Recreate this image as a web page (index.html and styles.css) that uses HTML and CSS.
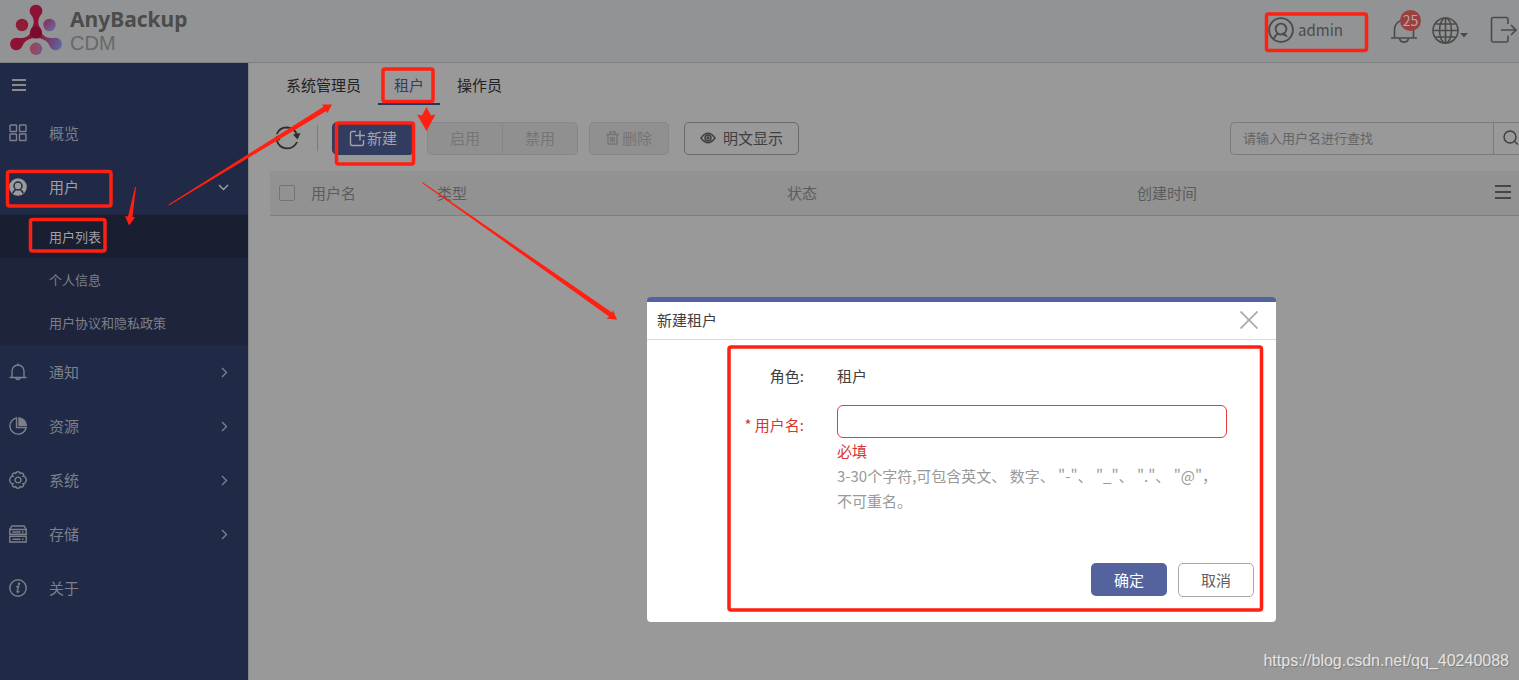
FILE: index.html
```html
<!DOCTYPE html>
<html lang="zh-CN">
<head>
<meta charset="utf-8">
<title>AnyBackup CDM</title>
<link rel="stylesheet" href="styles.css">
</head>
<body>
<div class="app">
  <header class="topbar">
    <div class="brand">
      <svg class="brand-mark" width="54" height="52" viewBox="0 0 54 52" aria-hidden="true">
        <defs>
          <linearGradient id="g" gradientUnits="userSpaceOnUse" x1="22" y1="28" x2="51" y2="42">
            <stop offset="0" stop-color="#8c1236"/><stop offset=".3" stop-color="#861a40"/><stop offset="1" stop-color="#6264a0"/>
          </linearGradient>
          <linearGradient id="h" x1="0" y1="0" x2="1" y2="1">
            <stop offset="0" stop-color="#8c2550"/><stop offset="1" stop-color="#6670ae"/>
          </linearGradient>
          <linearGradient id="k" x1="0" y1="0" x2="1" y2="0">
            <stop offset="0" stop-color="#9c4253"/><stop offset="1" stop-color="#7e5482"/>
          </linearGradient>
        </defs>
        <g fill="url(#g)">
          <path d="M27 .7a6.300 6.300 0 0 1 4.800 10.400C28.500 15 28.500 20 31.500 24.500L33 29.500C36 33.500 39 34.300 45 33.900A6.300 6.300 0 1 1 40.600 42C39 38 36 35.500 31 34.300H23C18 35.500 15 38 13.400 42A6.300 6.300 0 1 1 9 33.900C15 34.300 18 33.500 21 29.500L22.500 24.500C25.500 20 25.500 15 22.200 11.100A6.300 6.300 0 0 1 27 .7z"/>
        </g>
        <circle cx="27" cy="28.500" r="6" fill="#7b0b2f"/>
        <circle cx="13" cy="21" r="6.200" fill="#8f1d36"/>
        <circle cx="40.500" cy="21" r="6.200" fill="url(#h)"/>
        <circle cx="27" cy="44.800" r="6.200" fill="url(#k)"/>
      </svg>
      <div class="brand-text">
        <span class="brand-name">AnyBackup</span>
        <span class="brand-sub">CDM</span>
      </div>
    </div>
    <div class="top-actions">
      <button class="account" type="button">
        <svg width="26" height="26" viewBox="0 0 28 28" class="line thick" aria-hidden="true"><circle cx="14" cy="14" r="12.800"/><circle cx="14" cy="13" r="5.800"/><path d="M6.500 23.500c.8-3 2.200-4.500 4.600-5.500M17 18.500c1.500.7 2.700 1.500 3.300 3M15.500 17l2.500 2.700"/></svg>
        <span>admin</span>
      </button>
      <button class="bell" type="button" aria-label="通知 25">
        <svg width="28" height="28" viewBox="0 0 28 28" class="line mid" aria-hidden="true"><path d="M1 22h26M4.500 22v-8.500a9.500 9.500 0 0 1 19 0V22M9.500 22.500a4.600 4.600 0 0 0 9 0"/></svg>
        <span class="badge">25</span>
      </button>
      <button class="globe" type="button" aria-label="语言">
        <svg width="27" height="27" viewBox="0 0 27 27" class="line mid" aria-hidden="true"><circle cx="13.500" cy="13.500" r="12.500"/><ellipse cx="13.500" cy="13.500" rx="6" ry="12.500"/><path d="M13.500 1v25M1 13.500h25M3.500 7h20M3.500 20h20"/></svg>
        <svg width="8" height="5" viewBox="0 0 8 5" class="caret" aria-hidden="true"><path d="M0 0h8L4 4.500z"/></svg>
      </button>
      <button class="logout" type="button" aria-label="退出">
        <svg width="27" height="28" viewBox="0 0 27 28" class="line mid" aria-hidden="true"><path d="M18 8V3.500Q18 1.500 16 1.500H3.500Q1.500 1.500 1.500 3.500v20.500q0 2 2 2H16q2 0 2-2V19.500M11 14h15M21 9l5 5-5 5"/></svg>
      </button>
    </div>
  </header>

  <div class="shell">
    <nav class="sidebar">
      <button class="collapse" type="button" aria-label="收起菜单">
        <svg width="14" height="12" viewBox="0 0 14 12" aria-hidden="true"><path fill="#8a8b8f" d="M0 0h14v2H0zM0 5h14v2H0zM0 10h14v2H0z"/></svg>
      </button>
      <a class="item" href="#"><svg width="18" height="18" viewBox="0 0 18 18" class="line" aria-hidden="true"><rect x="1" y="1" width="6.500" height="6.500" rx=".5"/><rect x="10.500" y="1" width="6.500" height="6.500" rx=".5"/><rect x="1" y="10" width="6.500" height="6.500" rx=".5"/><rect x="10.500" y="10" width="6.500" height="6.500" rx=".5"/></svg><span>概览</span></a>
      <a class="item open" href="#"><svg width="18" height="18" viewBox="0 0 18 18" aria-hidden="true"><circle cx="9" cy="9" r="8.800" fill="#9b9b9b"/><g fill="none" stroke="#202946" stroke-width="1.500"><circle cx="9" cy="8" r="4"/><path d="M3.800 15.500c.4-2 1.500-3 3-3.800M14.200 15.500c-.4-2-1.500-3-3-3.800"/></g></svg><span>用户</span><svg class="arrow line" width="12" height="12" viewBox="0 0 12 12" aria-hidden="true"><path d="M1 4l4.500 4.500L10 4"/></svg></a>
      <div class="submenu">
        <a class="sub current" href="#">用户列表</a>
        <a class="sub" href="#">个人信息</a>
        <a class="sub" href="#">用户协议和隐私政策</a>
      </div>
      <a class="item" href="#"><svg width="18" height="18" viewBox="0 0 18 18" class="line" aria-hidden="true"><path d="M.5 14.500h17M3 14V8a6 6 0 0 1 12 0v6M9 .5V2M6.800 15a2.300 2.300 0 0 0 4.400 0"/></svg><span>通知</span><svg class="arrow line" width="12" height="12" viewBox="0 0 12 12" aria-hidden="true"><path d="M4 2l4.500 4.500L4 11"/></svg></a>
      <a class="item" href="#"><svg width="18" height="18" viewBox="0 0 18 18" class="line" aria-hidden="true"><path d="M7.500.9A8.200 8.200 0 1 0 17.200 10.500H7.500z"/><path fill="currentColor" d="M10 1v7.300h7.300A7.800 7.800 0 0 0 10 1z"/></svg><span>资源</span><svg class="arrow line" width="12" height="12" viewBox="0 0 12 12" aria-hidden="true"><path d="M4 2l4.500 4.500L4 11"/></svg></a>
      <a class="item" href="#"><svg width="18" height="18" viewBox="0 0 18 18" class="line" aria-hidden="true"><path d="M6.800 2.300Q7.200.8 9 .8t2.200 1.500Q12.500 1.400 13.900 2.600t.3 2.600Q16 5 16.400 6.600q1.200.9.900 2.400t-.9 2.400Q16 13 14.200 12.800q1.100 1.400-.3 2.600t-2.700.3Q10.800 17.200 9 17.200t-2.200-1.500Q5.500 16.600 4.100 15.400t-.3-2.600Q2 13 1.600 11.400.7 10.500.7 9t.9-2.400Q2 5 3.800 5.200 2.700 3.800 4.100 2.600t2.700-.3z"/><circle cx="9" cy="9" r="2.900"/></svg><span>系统</span><svg class="arrow line" width="12" height="12" viewBox="0 0 12 12" aria-hidden="true"><path d="M4 2l4.500 4.500L4 11"/></svg></a>
      <a class="item" href="#"><svg width="18" height="18" viewBox="0 0 18 18" class="line" aria-hidden="true"><path d="M1 4L2.800 1h12.400L17 4M.8 4.500h16.400v4.800H.8zM.8 11.200h16.400V17H.8zM3.500 7h8M13 7h1.500M3.500 14.200h8M13 14.200h1.500"/></svg><span>存储</span><svg class="arrow line" width="12" height="12" viewBox="0 0 12 12" aria-hidden="true"><path d="M4 2l4.500 4.500L4 11"/></svg></a>
      <a class="item" href="#"><svg width="18" height="18" viewBox="0 0 18 18" class="line" aria-hidden="true"><circle cx="9" cy="9" r="8.200"/><path d="M7.300 7.700l2.300-.5-1.500 5.600q.2 1 2.300-.6"/><circle cx="10" cy="4.700" r=".6" fill="currentColor"/></svg><span>关于</span></a>
    </nav>

    <main class="content">
      <div class="tabs" role="tablist">
        <button class="tab" role="tab" type="button">系统管理员</button>
        <button class="tab selected" role="tab" type="button" aria-selected="true">租户</button>
        <button class="tab" role="tab" type="button">操作员</button>
      </div>

      <div class="toolbar">
        <button class="refresh" type="button" aria-label="刷新">
          <svg width="28" height="26" viewBox="0 0 28 26" aria-hidden="true"><g fill="none" stroke="#2c2c2c" stroke-width="1.800"><path d="M3.800 9A10.800 10.800 0 0 1 24 10M24 17A10.800 10.800 0 0 1 3.800 15.500"/></g><path fill="#2c2c2c" d="M20 9.500l7.500-1.500L24.500 14.500zM.5 16.500l7-1.500L3.500 10.500z"/></svg>
        </button>
        <span class="divider"></span>
        <button class="btn primary" type="button"><svg width="17" height="17" viewBox="0 0 17 17" class="line" aria-hidden="true"><path d="M7 1.500H3Q1.500 1.500 1.500 3v11q0 1.500 1.500 1.500h10q1.500 0 1.500-1.500v-4M11 .5v10M6 5.500h10"/></svg>新建</button>
        <div class="group">
          <button class="btn off" type="button" disabled>启用</button>
          <button class="btn off" type="button" disabled>禁用</button>
        </div>
        <button class="btn off delete" type="button" disabled><svg width="13" height="14" viewBox="0 0 13 14" class="line" aria-hidden="true"><path d="M0 3.500h13M4 3V1h5v2M2 4v9h9V4M4.800 6v5M6.500 6v5M8.300 6v5"/></svg>删除</button>
        <button class="btn outline" type="button"><svg width="16" height="12" viewBox="0 0 16 12" class="line" aria-hidden="true"><path d="M1 6Q8-3.500 15 6 8 15.500 1 6z"/><circle cx="8" cy="6" r="3"/><circle cx="8" cy="6" r="1"/></svg>明文显示</button>
        <div class="search">
          <input type="text" aria-label="用户名" placeholder="请输入用户名进行查找">
          <button type="button" aria-label="查找"><svg width="16" height="16" viewBox="0 0 16 16" class="line" aria-hidden="true"><circle cx="7" cy="7" r="6"/><path d="M11.500 11.500L15 14.500"/></svg></button>
        </div>
      </div>

      <table class="users">
        <thead>
          <tr>
            <th class="c-check"><input type="checkbox" aria-label="全选"></th>
            <th class="c-name">用户名</th>
            <th>类型</th>
            <th>状态</th>
            <th>创建时间</th>
            <th class="c-menu"><button type="button" aria-label="列设置"><svg width="16" height="14" viewBox="0 0 16 14" aria-hidden="true"><path stroke="#2e2e2e" stroke-width="1.500" d="M0 1h16M0 7h16M0 13h16"/></svg></button></th>
          </tr>
        </thead>
      </table>
    </main>
  </div>

  <section class="dialog" role="dialog" aria-labelledby="dialog-title">
    <div class="dialog-head">
      <h2 id="dialog-title">新建租户</h2>
      <button class="close" type="button" aria-label="关闭"><svg width="18" height="18" viewBox="0 0 18 18" aria-hidden="true"><path stroke="#acacac" stroke-width="1.800" d="M.5.5l17 17M17.500.5l-17 17"/></svg></button>
    </div>
    <form class="form">
      <span class="label">角色:</span>
      <span class="value">租户</span>
      <label class="label required" for="username">* 用户名:</label>
      <div class="field">
        <input id="username" type="text">
        <p class="error">必填</p>
        <p class="hint">3-30个字符,可包含英文、 数字、 "-"、 "_"、 "."、 "@"，<br>不可重名。</p>
      </div>
    </form>
    <div class="dialog-foot">
      <button class="ok" type="button">确定</button>
      <button class="cancel" type="button">取消</button>
    </div>
  </section>

  <svg class="marks" width="1519" height="680" viewBox="0 0 1519 680" aria-hidden="true">
    <g fill="none" stroke="#ff2012" stroke-width="3.500">
      <rect x="1266.500" y="14" width="100" height="36.500" rx="2"/>
      <rect x="7.500" y="171.500" width="103.500" height="34.500" rx="2"/>
      <rect x="30.500" y="219.500" width="74.500" height="31.500" rx="2"/>
      <rect x="383" y="69" width="50" height="32.500" rx="2"/>
      <rect x="336.500" y="123" width="77" height="41" rx="2"/>
      <rect x="729" y="347" width="532.500" height="263" rx="2"/>
    </g>
    <g fill="#ff2012">
      <path d="M168.500 204.500L323.500 106.800 322 104.500 332 104.500 327.500 113 326 111.200 169 205.500z"/>
      <path d="M135 187l1 0-3.500 30 2.500.5-6 8-4-9.500 3 .5z"/>
      <path d="M426.500 107l4.500 8.500 4.500-1-9 16.500-9.500-16.500 5 1z"/>
      <path d="M422.700 182.300L612 312.500 613 310 617 319.800 606.500 318.500 609 316.500 422.300 183.200z"/>
    </g>
  </svg>
  <span class="watermark">https://blog.csdn.net/qq_40240088</span>
</div>
</body>
</html>
```
FILE: styles.css
```css
* { box-sizing: border-box; }
body {
  margin: 0;
  background: #999;
  color: #222;
  font: 15px/24px "Noto Sans CJK SC", sans-serif;
}
button, input { font: inherit; color: inherit; }
button { padding: 0; border: 0; background: none; }
a { color: inherit; text-decoration: none; }
p, h2 { margin: 0; font-weight: 400; font-size: 15px; }
svg { display: block; flex: none; }
.line { fill: none; stroke: currentColor; stroke-width: 1.4; }
.mid { stroke-width: 1.6; }
.thick { stroke-width: 2; }

.app { position: relative; display: flex; flex-direction: column; min-height: 100vh; overflow: hidden; }

.topbar {
  display: flex;
  justify-content: space-between;
  align-items: center;
  height: 63px;
  padding: 0 2px 2px 9px;
  border-bottom: 1px solid #7c7e80;
  background: #919394;
  color: #4b4b4b;
}
.brand { display: flex; align-items: center; gap: 7px; }
.brand-text { display: flex; flex-direction: column; padding-top: 2px; }
.brand-name { color: #4c4c4a; font: 700 21px/24px "Noto Sans", sans-serif; }
.brand-sub { color: #686868; font: 20px/24px "Liberation Sans", sans-serif; }
.top-actions { display: flex; align-items: center; }
.account { display: flex; align-items: center; gap: 4px; margin-right: 47px; font-size: 15px; }
.bell { position: relative; margin-right: 14px; }
.badge {
  position: absolute;
  left: 10px;
  top: -6px;
  width: 21px;
  height: 21px;
  border-radius: 50%;
  background: #9c3f3f;
  color: #b5a5a5;
  font-size: 14px;
  line-height: 20px;
  text-align: center;
}
.globe { display: flex; align-items: center; gap: 1px; margin-right: 22px; }
.caret { fill: currentColor; margin-top: 10px; }

.shell { display: flex; flex: 1; }
.sidebar {
  display: flex;
  flex-direction: column;
  flex: none;
  width: 249px;
  border-right: 1px solid #85868a;
  background: #202946;
  color: #7d808a;
}
.collapse { height: 43px; padding-left: 12px; }
.item { display: flex; align-items: center; height: 54px; padding: 0 18px 0 9px; gap: 22px; }
.item .arrow { margin-left: auto; }
.open { color: #a0a1a5; }
.submenu { padding: 1px 0; background: #1d243b; font-size: 13px; }
.sub { display: flex; align-items: center; height: 43px; padding-left: 49px; }
.current { background: #191e30; color: #a0a1a5; }

.content { display: flex; flex-direction: column; flex: 1; min-width: 0; padding-left: 21px; }
.tabs { display: flex; gap: 1px; height: 42px; }
.tab { padding: 3px 16px 0; border-bottom: 2px solid transparent; }
.selected { border-color: #26335f; color: #333d66; }

.toolbar { display: flex; align-items: center; height: 66px; padding-left: 3px; }
.refresh { margin-right: 16px; }
.divider { width: 1px; height: 26px; margin-right: 14px; background: #7b7b7b; }
.btn {
  display: flex;
  align-items: center;
  justify-content: center;
  height: 33px;
  padding: 0 15px;
  border: 1px solid #878787;
  border-radius: 5px;
}
.primary { gap: 1px; width: 82px; margin-right: 13px; border-color: #323b60; background: #323b60; color: #a2a4ac; }
.group { display: flex; margin-right: 11px; }
.group .btn { width: 76px; }
.group .btn:first-child { border-radius: 5px 0 0 5px; border-right: 0; width: 75px; }
.group .btn:last-child { border-radius: 0 5px 5px 0; }
.off { background: #909090; color: #757575; }
.delete { gap: 3px; width: 80px; margin-right: 15px; }
.outline { gap: 7px; border-color: #6a6a6a; color: #3f3f3f; }
.search { display: flex; width: 289px; height: 33px; margin-left: auto; border: 1px solid #7b7b7b; border-right: 0; border-radius: 5px 0 0 5px; }
.search input { flex: 1; min-width: 0; padding: 0 12px; border: 0; background: none; outline: 0; font-size: 13px; }
.search input::placeholder { color: #646464; opacity: 1; }
.search button { width: 26px; padding-left: 9px; border-left: 1px solid #7b7b7b; color: #3f3f3f; }

.users { width: 100%; border-collapse: collapse; table-layout: fixed; color: #5c5c5c; }
.users th { height: 44px; padding: 0; border-bottom: 1px solid #7e7e7e; background: #929292; font-weight: 400; text-align: left; }
.c-check { width: 41px; }
.users .c-check { padding-left: 9px; }
.c-check input { display: block; width: 16px; height: 16px; margin: 0; appearance: none; border: 1px solid #747474; border-radius: 2px; }
.c-name { width: 126px; }
.c-menu { width: 32px; }
.users .c-menu { padding-left: 8px; }

.dialog {
  position: absolute;
  left: 647px;
  top: 297px;
  width: 629px;
  border-top: 5px solid #54629e;
  border-radius: 4px;
  background: #fff;
  color: #404040;
}
.dialog-head { display: flex; align-items: center; justify-content: space-between; height: 38px; padding: 0 18px 2px 10px; border-bottom: 1px solid #d9d9d9; }
.form { display: grid; grid-template-columns: 157px 390px; column-gap: 33px; row-gap: 17px; padding-top: 23px; line-height: 25px; }
.label { text-align: right; }
.required { padding-top: 7px; color: #d9362f; }
.field input { display: block; width: 100%; height: 33px; padding: 0 10px; border: 1px solid #e0403a; border-radius: 6px; outline: 0; }
.error { color: #d9362f; }
.hint { color: #999; white-space: nowrap; }
.dialog-foot { display: flex; align-items: flex-start; justify-content: flex-end; gap: 11px; padding: 50px 22px 25px 0; }
.ok, .cancel { width: 76px; height: 34px; border-radius: 5px; }
.ok { height: 33px; background: #54629e; color: #fff; }
.cancel { border: 1px solid #aaa; color: #606060; }

.marks { position: absolute; left: 0; top: 0; pointer-events: none; }
.watermark { position: absolute; right: 10px; bottom: 7px; color: #e4e4e4; font: 16px/24px "Liberation Sans", sans-serif; text-shadow: 1px 1px 1px #777; }
```
